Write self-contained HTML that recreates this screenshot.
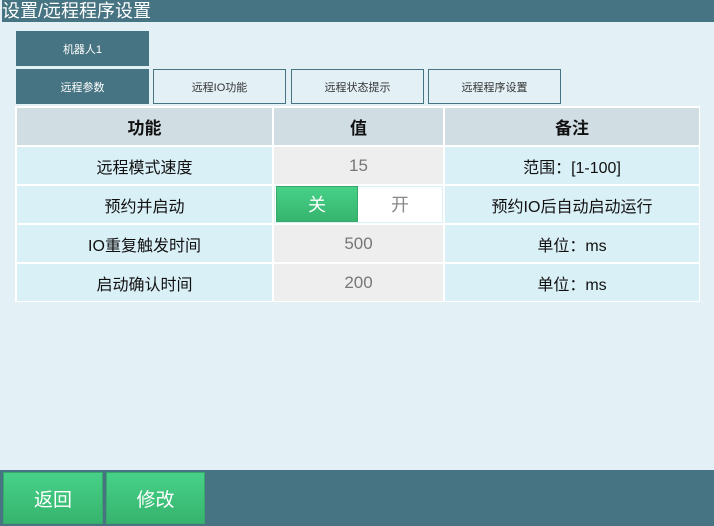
<!DOCTYPE html>
<html><head><meta charset="utf-8"><style>
*{margin:0;padding:0;box-sizing:border-box}
body{width:714px;height:526px;background:#e3f1f7;position:relative;overflow:hidden;font-family:"Liberation Sans","Noto Sans CJK SC",sans-serif}
.a{position:absolute;display:flex;align-items:center;justify-content:center}
.hdr{left:2px;top:0;width:712px;height:22px;background:#477482;color:#fff;font-size:18px;justify-content:flex-start;padding-left:0;line-height:22px}
.tab{font-size:11px;color:#333;border:1px solid #477482;background:#e3f1f7}
.tab.on{background:#477482;color:#fff;border:none}
.c{font-size:16px;color:#111;background:#daf0f7}
.h{font-size:17px;font-weight:bold;background:#d0dde2;color:#111}
.v{background:#eeeeee;color:#777;font-size:17px}
.btn{background:linear-gradient(#47d188,#36b46e);color:#fff;font-size:19px;border:1px solid #3aa86a}
</style></head><body>
<div class="a hdr">设置/远程程序设置</div>
<div class="a tab on" style="left:16px;top:31px;width:133px;height:35px">机器人1</div>
<div class="a tab on" style="left:16px;top:69px;width:133px;height:35px">远程参数</div>
<div class="a tab" style="left:153px;top:69px;width:133px;height:35px">远程IO功能</div>
<div class="a tab" style="left:291px;top:69px;width:133px;height:35px">远程状态提示</div>
<div class="a tab" style="left:428px;top:69px;width:133px;height:35px">远程程序设置</div>
<div style="position:absolute;left:15px;top:106px;width:685px;height:196px;background:#fff"></div>
<div class="a h" style="left:17px;top:108px;width:255px;height:37px">功能</div>
<div class="a h" style="left:274px;top:108px;width:169px;height:37px">值</div>
<div class="a h" style="left:445px;top:108px;width:254px;height:37px">备注</div>

<div class="a c" style="left:17px;top:147px;width:255px;height:37px">远程模式速度</div>
<div class="a v" style="left:274px;top:147px;width:169px;height:37px">15</div>
<div class="a c" style="left:445px;top:147px;width:254px;height:37px">范围：[1-100]</div>

<div class="a c" style="left:17px;top:186px;width:255px;height:37px">预约并启动</div>
<div style="position:absolute;left:274px;top:186px;width:169px;height:37px;background:#fff;border:1px solid #daf0f7"></div>
<div class="a" style="left:276px;top:186px;width:82px;height:36px;background:linear-gradient(#47d188,#36b46e);border:1px solid #3aa86a;color:#fff;font-size:18px">关</div>
<div class="a" style="left:358px;top:186px;width:84px;height:36px;color:#888;font-size:18px">开</div>
<div class="a c" style="left:445px;top:186px;width:254px;height:37px">预约IO后自动启动运行</div>

<div class="a c" style="left:17px;top:225px;width:255px;height:37px">IO重复触发时间</div>
<div class="a v" style="left:274px;top:225px;width:169px;height:37px">500</div>
<div class="a c" style="left:445px;top:225px;width:254px;height:37px">单位：ms</div>

<div class="a c" style="left:17px;top:264px;width:255px;height:37px">启动确认时间</div>
<div class="a v" style="left:274px;top:264px;width:169px;height:37px">200</div>
<div class="a c" style="left:445px;top:264px;width:254px;height:37px">单位：ms</div>

<div style="position:absolute;left:0;top:470px;width:714px;height:56px;background:#477482"></div>
<div class="a btn" style="left:3px;top:472px;width:100px;height:52px">返回</div>
<div class="a btn" style="left:106px;top:472px;width:99px;height:52px">修改</div>
</body></html>
